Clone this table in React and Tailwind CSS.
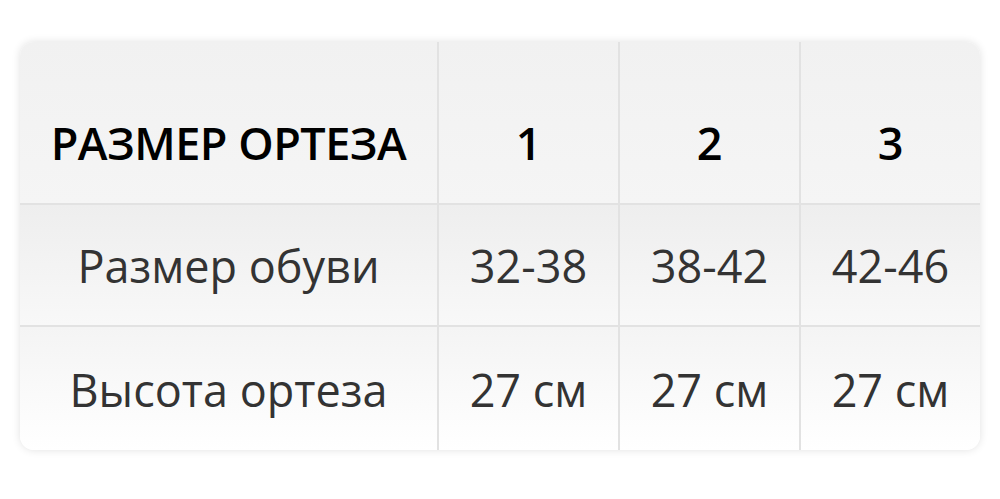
import React from 'react';

const rows = [
  { label: 'Размер обуви', values: ['32-38', '38-42', '42-46'] },
  { label: 'Высота ортеза', values: ['27 см', '27 см', '27 см'] },
];

const App = () => {
  return (
    <div className="w-[1000px] h-[499px] bg-white pt-[42px] px-[20px]" style={{ fontFamily: '"Open Sans", sans-serif' }}>
      <div className="rounded-[14px] overflow-hidden shadow-[0_0_8px_rgba(0,0,0,0.12)] bg-white">
        <div className="grid grid-cols-[417px_181px_181px_181px] h-[163px] bg-gradient-to-b from-[#f1f1f1] to-[#f5f5f5] border-b-2 border-[#e2e2e2]">
          <div className="flex items-center justify-center text-[45px] font-semibold text-black tracking-[-0.5px] pt-[40px]">РАЗМЕР ОРТЕЗА</div>
          {['1', '2', '3'].map((n) => (
            <div key={n} className="flex items-center justify-center text-[45px] font-semibold text-black border-l-2 border-[#e2e2e2] pt-[40px]">{n}</div>
          ))}
        </div>
        {rows.map((row, i) => (
          <div
            key={row.label}
            className={
              i === 0
                ? 'grid grid-cols-[417px_181px_181px_181px] h-[122px] bg-gradient-to-b from-[#eeeeee] to-[#f8f8f8] border-b-2 border-[#e2e2e2]'
                : 'grid grid-cols-[417px_181px_181px_181px] h-[123px] bg-gradient-to-b from-[#f4f4f4] to-[#ffffff]'
            }
          >
            <div className="flex items-center justify-center text-[45px] text-[#333333] pt-[2px]">{row.label}</div>
            {row.values.map((v, j) => (
              <div key={j} className="flex items-center justify-center text-[45px] text-[#333333] border-l-2 border-[#e2e2e2] pt-[2px]">{v}</div>
            ))}
          </div>
        ))}
      </div>
    </div>
  );
};

export default App;
